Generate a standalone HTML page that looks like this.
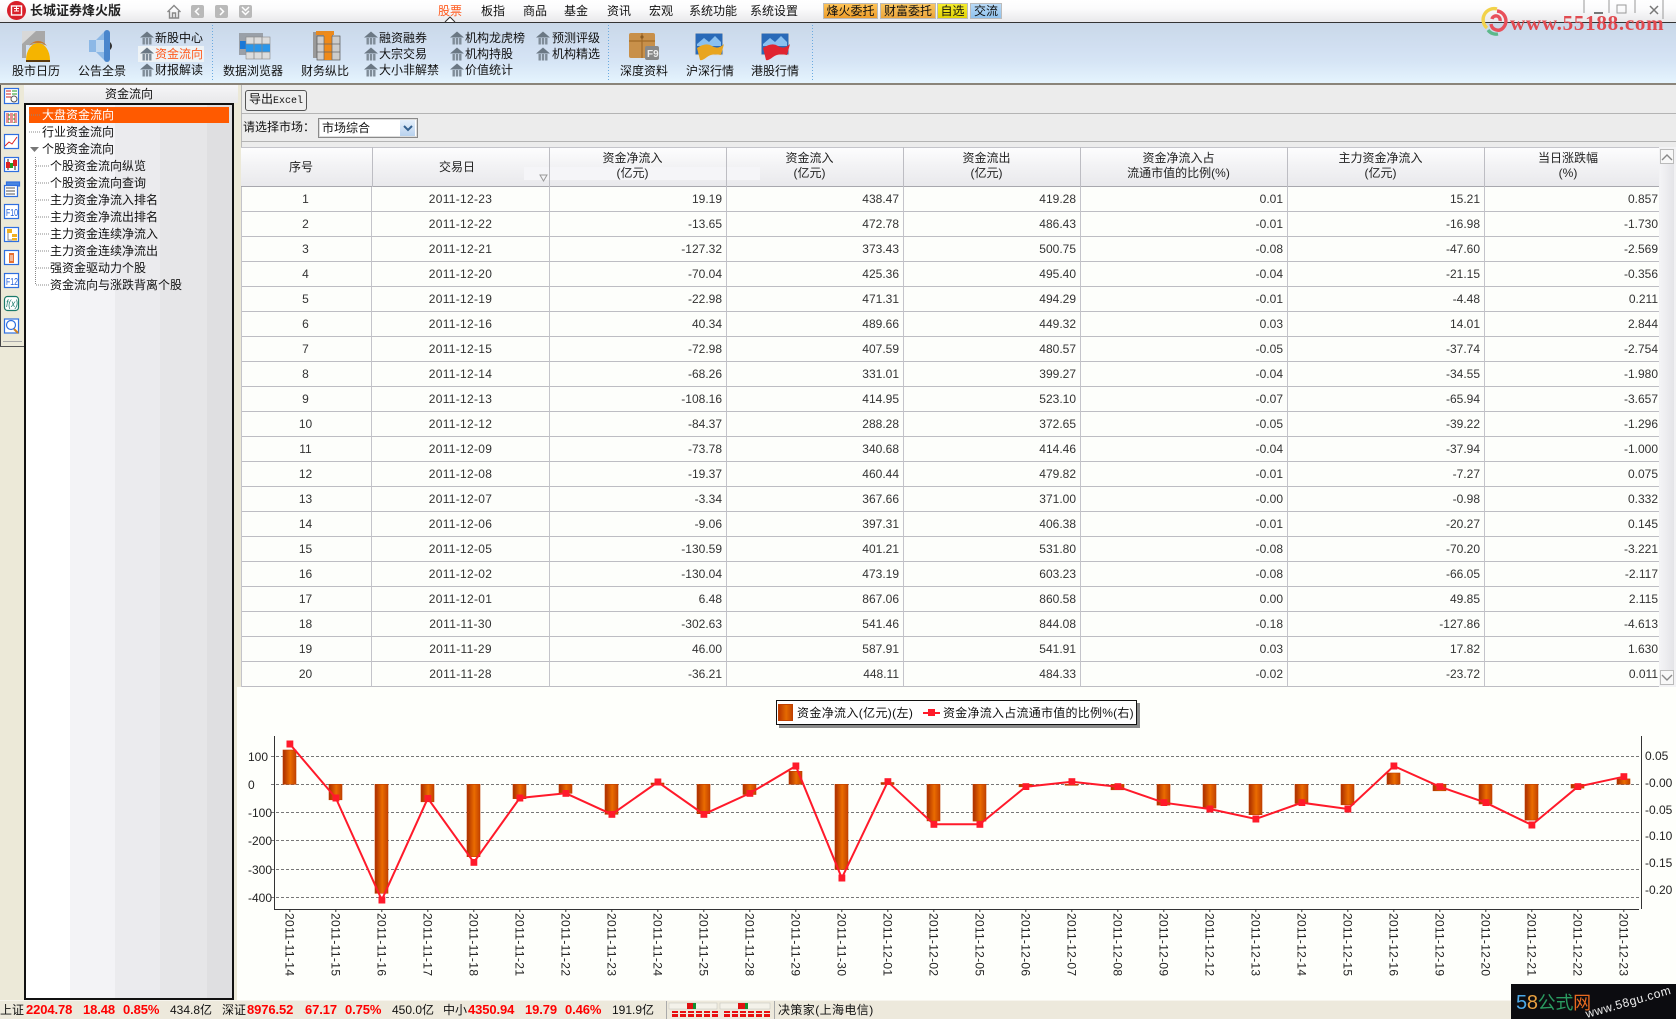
<!DOCTYPE html>
<html lang="zh"><head><meta charset="utf-8"><title>长城证券烽火版</title>
<style>
html,body{margin:0;padding:0;background:#ecebe6}
#p{position:relative;width:1676px;height:1019px;overflow:hidden;font:12px/16px "Liberation Sans","WenQuanYi Zen Hei","Noto Sans CJK SC",sans-serif;color:#111;background:#ece9d8}
.a{position:absolute}
.t{position:absolute;white-space:nowrap;line-height:16px;font-size:12px}
.o{color:#ff5a1e}
.r{color:#f00;font-weight:bold;font-size:13px;letter-spacing:-.1px}
.g{font-size:12px;color:#111}
table{position:absolute;left:241px;top:187px;border-collapse:separate;border-spacing:0;table-layout:fixed;width:1418px;background:#fdfefb;border-left:1px solid #c4c4ca;font-size:12px;color:#333}
td{height:24px;padding:0 4px 0 0;border-right:1px solid #c4c4ca;border-bottom:1px solid #bdbdc3;text-align:right;overflow:hidden;white-space:nowrap;box-sizing:content-box}
td.c{text-align:center;padding:0}
td:first-child{padding-right:2px}
td:nth-child(2){letter-spacing:.3px}
td:last-child{border-right:0;padding-right:1px}
.h{position:absolute;top:147px;height:40px;text-align:center;line-height:15px;font-size:12px;color:#222;box-sizing:border-box;padding-top:4px;padding-right:12px}
.tab{position:absolute;top:3px;height:16px;line-height:16px;text-align:center;font-size:12px;color:#111;box-shadow:inset 0 0 0 1px #bbb}
svg{position:absolute;left:0;top:0}
text{font-family:"Liberation Sans",sans-serif}
</style></head><body><div id="p">

<!-- top bar -->
<div class="a" style="left:0;top:0;width:1676px;height:22px;background:linear-gradient(#fff,#fbfbfc 40%,#e9e9eb)"></div>
<div class="a" style="left:0;top:22px;width:1676px;height:1px;background:#333"></div>
<!-- toolbar -->
<div class="a" style="left:0;top:23px;width:1676px;height:60px;background:linear-gradient(#c9d8e8,#d2e0f2 45%,#d6e5f5 65%,#e5f4fe)"></div>
<div class="a" style="left:0;top:83px;width:1676px;height:2px;background:#8a847a"></div>

<!-- left panel -->
<div class="a" style="left:0;top:85px;width:1px;height:262px;background:#444"></div>
<div class="a" style="left:24px;top:85px;width:214px;height:18px;background:linear-gradient(#f6f6f8,#e8e8ea)"></div>
<div class="a" style="left:24px;top:103px;width:206px;height:893px;border:2px solid #111;background:linear-gradient(90deg,#fff 0 44px,#f3f3f6 44px 89px,#ebebee 89px 134px,#e6e6e8 134px 181px,#dfdfe1 181px)"></div>
<div class="a" style="left:29px;top:107px;width:200px;height:16px;background:#ff5a00"></div>

<!-- right header area -->
<div class="a" style="left:241px;top:85px;width:1435px;height:62px;background:#ececec"></div>
<div class="a" style="left:241px;top:85px;width:1px;height:62px;background:#bbb"></div>
<div class="a" style="left:241px;top:113px;width:1435px;height:1px;background:#b4b4b4"></div>
<div class="a" style="left:241px;top:141px;width:1435px;height:1px;background:#b4b4b4"></div>
<div class="a" style="left:245px;top:90px;width:60px;height:19px;border:1px solid #555;border-radius:3px;background:#eee;font:10px/19px 'Liberation Mono','WenQuanYi Zen Hei',monospace;text-align:center"><span style="font-size:12px">导出</span>Excel</div>
<div class="a" style="left:318px;top:118px;width:98px;height:18px;border:1px solid #8a8a8a;background:#fff;box-shadow:inset 0 0 0 1px #ddd"></div>
<div class="a" style="left:400px;top:120px;width:15px;height:16px;background:linear-gradient(#e6f0fb,#b9d2ee);border:0"></div>

<!-- chart bg -->
<div class="a" style="left:237px;top:687px;width:1439px;height:314px;background:#fefffb"></div>
<!-- status bar -->
<div class="a" style="left:0;top:1000px;width:1676px;height:19px;background:#ede9dc;border-top:1px solid #f7f5ee;box-sizing:border-box"></div>

<!-- table header -->
<div class="a" style="left:241px;top:147px;width:1418px;height:40px;background:linear-gradient(#fdfdfe,#f3f3f5 45%,#e9e9ec);border-top:1px solid #c4c4ca;border-bottom:1px solid #a8a8ae;box-sizing:border-box"></div>
<div class="a" style="left:524px;top:167px;width:236px;height:13px;background:#f5f5f8"></div>
<div class="h" style="left:242px;width:130px;padding-top:13px">序号</div>
<div class="h" style="left:372px;width:178px;padding-top:13px;padding-right:8px">交易日</div>
<div class="h" style="left:550px;width:177px">资金净流入<br>(亿元)</div>
<div class="h" style="left:727px;width:177px">资金流入<br>(亿元)</div>
<div class="h" style="left:904px;width:177px">资金流出<br>(亿元)</div>
<div class="h" style="left:1081px;width:207px">资金净流入占<br>流通市值的比例(%)</div>
<div class="h" style="left:1288px;width:197px">主力资金净流入<br>(亿元)</div>
<div class="h" style="left:1485px;width:174px;padding-right:8px">当日涨跌幅<br>(%)</div>
<div class="a" style="left:372px;top:147px;width:1px;height:40px;background:#bdbdc3"></div>
<div class="a" style="left:549px;top:147px;width:1px;height:40px;background:#bdbdc3"></div>
<div class="a" style="left:726px;top:147px;width:1px;height:40px;background:#bdbdc3"></div>
<div class="a" style="left:903px;top:147px;width:1px;height:40px;background:#bdbdc3"></div>
<div class="a" style="left:1080px;top:147px;width:1px;height:40px;background:#bdbdc3"></div>
<div class="a" style="left:1287px;top:147px;width:1px;height:40px;background:#bdbdc3"></div>
<div class="a" style="left:1484px;top:147px;width:1px;height:40px;background:#bdbdc3"></div>

<table><colgroup><col style="width:130px"><col style="width:178px"><col style="width:177px"><col style="width:177px"><col style="width:177px"><col style="width:207px"><col style="width:197px"><col style="width:174px"></colgroup>
<tr><td class="c">1</td><td class="c">2011-12-23</td><td>19.19</td><td>438.47</td><td>419.28</td><td>0.01</td><td>15.21</td><td>0.857</td></tr>
<tr><td class="c">2</td><td class="c">2011-12-22</td><td>-13.65</td><td>472.78</td><td>486.43</td><td>-0.01</td><td>-16.98</td><td>-1.730</td></tr>
<tr><td class="c">3</td><td class="c">2011-12-21</td><td>-127.32</td><td>373.43</td><td>500.75</td><td>-0.08</td><td>-47.60</td><td>-2.569</td></tr>
<tr><td class="c">4</td><td class="c">2011-12-20</td><td>-70.04</td><td>425.36</td><td>495.40</td><td>-0.04</td><td>-21.15</td><td>-0.356</td></tr>
<tr><td class="c">5</td><td class="c">2011-12-19</td><td>-22.98</td><td>471.31</td><td>494.29</td><td>-0.01</td><td>-4.48</td><td>0.211</td></tr>
<tr><td class="c">6</td><td class="c">2011-12-16</td><td>40.34</td><td>489.66</td><td>449.32</td><td>0.03</td><td>14.01</td><td>2.844</td></tr>
<tr><td class="c">7</td><td class="c">2011-12-15</td><td>-72.98</td><td>407.59</td><td>480.57</td><td>-0.05</td><td>-37.74</td><td>-2.754</td></tr>
<tr><td class="c">8</td><td class="c">2011-12-14</td><td>-68.26</td><td>331.01</td><td>399.27</td><td>-0.04</td><td>-34.55</td><td>-1.980</td></tr>
<tr><td class="c">9</td><td class="c">2011-12-13</td><td>-108.16</td><td>414.95</td><td>523.10</td><td>-0.07</td><td>-65.94</td><td>-3.657</td></tr>
<tr><td class="c">10</td><td class="c">2011-12-12</td><td>-84.37</td><td>288.28</td><td>372.65</td><td>-0.05</td><td>-39.22</td><td>-1.296</td></tr>
<tr><td class="c">11</td><td class="c">2011-12-09</td><td>-73.78</td><td>340.68</td><td>414.46</td><td>-0.04</td><td>-37.94</td><td>-1.000</td></tr>
<tr><td class="c">12</td><td class="c">2011-12-08</td><td>-19.37</td><td>460.44</td><td>479.82</td><td>-0.01</td><td>-7.27</td><td>0.075</td></tr>
<tr><td class="c">13</td><td class="c">2011-12-07</td><td>-3.34</td><td>367.66</td><td>371.00</td><td>-0.00</td><td>-0.98</td><td>0.332</td></tr>
<tr><td class="c">14</td><td class="c">2011-12-06</td><td>-9.06</td><td>397.31</td><td>406.38</td><td>-0.01</td><td>-20.27</td><td>0.145</td></tr>
<tr><td class="c">15</td><td class="c">2011-12-05</td><td>-130.59</td><td>401.21</td><td>531.80</td><td>-0.08</td><td>-70.20</td><td>-3.221</td></tr>
<tr><td class="c">16</td><td class="c">2011-12-02</td><td>-130.04</td><td>473.19</td><td>603.23</td><td>-0.08</td><td>-66.05</td><td>-2.117</td></tr>
<tr><td class="c">17</td><td class="c">2011-12-01</td><td>6.48</td><td>867.06</td><td>860.58</td><td>0.00</td><td>49.85</td><td>2.115</td></tr>
<tr><td class="c">18</td><td class="c">2011-11-30</td><td>-302.63</td><td>541.46</td><td>844.08</td><td>-0.18</td><td>-127.86</td><td>-4.613</td></tr>
<tr><td class="c">19</td><td class="c">2011-11-29</td><td>46.00</td><td>587.91</td><td>541.91</td><td>0.03</td><td>17.82</td><td>1.630</td></tr>
<tr><td class="c">20</td><td class="c">2011-11-28</td><td>-36.21</td><td>448.11</td><td>484.33</td><td>-0.02</td><td>-23.72</td><td>0.011</td></tr>
</table>

<!-- scrollbar -->
<div class="a" style="left:1659px;top:147px;width:17px;height:540px;background:#f2f2f4"></div>
<div class="a" style="left:1660px;top:149px;width:14px;height:15px;background:#f8f8f8;border:1px solid #bbb;box-sizing:border-box"></div>
<div class="a" style="left:1660px;top:670px;width:14px;height:15px;background:#f8f8f8;border:1px solid #bbb;box-sizing:border-box"></div>
<div class="a" style="left:1660px;top:164px;width:14px;height:506px;background:linear-gradient(90deg,#f4f4f6,#e4e4e8)"></div>

<!-- legend -->
<div class="a" style="left:776px;top:700px;width:361px;height:25px;background:#fff;border:1px solid #111;box-sizing:border-box;box-shadow:3px 3px 0 #8a8a8a"></div>
<div class="a" style="left:778px;top:704px;width:15px;height:17px;background:linear-gradient(90deg,#b53000,#e56a00 55%,#bf4000);box-shadow:inset 0 0 0 1px #c04000"></div>
<div class="t" style="left:797px;top:705px;color:#111;letter-spacing:.35px">资金净流入(亿元)(左)</div>
<div class="a" style="left:923px;top:712px;width:17px;height:2px;background:#ff1a2a"></div>
<div class="a" style="left:928px;top:709px;width:7px;height:7px;background:#ff1a2a"></div>
<div class="t" style="left:943px;top:705px;color:#111;letter-spacing:.25px">资金净流入占流通市值的比例%(右)</div>

<!-- SVG layer -->
<svg width="1676" height="1019" viewBox="0 0 1676 1019">
<defs>
<linearGradient id="b" x1="0" x2="1" y1="0" y2="0"><stop offset="0" stop-color="#a82c00"/><stop offset=".55" stop-color="#ea6c00"/><stop offset="1" stop-color="#c24200"/></linearGradient>
<marker id="m" markerUnits="userSpaceOnUse" markerWidth="7" markerHeight="7" refX="3.5" refY="3.5"><rect width="7" height="7" fill="#ff1a2a"/></marker>
<symbol id="bk" viewBox="0 0 14 14"><path d="M7 0.5 L0 6.5 H14 Z" fill="#6b7884"/><path d="M2.5 7h2.4v6.5h-2.4zM5.8 7h2.4v6.5H5.8zM9.1 7h2.4v6.5H9.1z" fill="#7f8c98"/></symbol>
</defs>

<!-- logo -->
<circle cx="16.5" cy="10.5" r="9.5" fill="#d8202a"/><rect x="11.5" y="6" width="10" height="9" fill="none" stroke="#fff" stroke-width="1.4"/><path d="M14 8.5h5M16.5 6v5M14 11h5" stroke="#fff" stroke-width="1"/>
<!-- nav icons -->
<path d="M167.5 12 L174 5.5 L180.5 12 M169.5 11 V18 H178.5 V11 M172.5 18 V13 H175.5 V18" fill="none" stroke="#888" stroke-width="1.4"/>
<rect x="191" y="5" width="13" height="13" rx="2" fill="#b9b9b9"/><path d="M199 8 L195.5 11.5 L199 15" fill="none" stroke="#fff" stroke-width="1.5"/>
<rect x="215" y="5" width="13" height="13" rx="2" fill="#b9b9b9"/><path d="M220 8 L223.5 11.5 L220 15" fill="none" stroke="#fff" stroke-width="1.5"/>
<rect x="239" y="5" width="13" height="13" rx="2" fill="#b9b9b9"/><path d="M242 7 L245.5 10.5 L249 7 M242 11 L245.5 14.5 L249 11" fill="none" stroke="#fff" stroke-width="1.5"/>
<path d="M445 22 L450 17 L455 22" fill="#fdfdfd" stroke="#333"/>

<!-- toolbar separators -->
<g stroke="#6aaae0" stroke-dasharray="1 2"><path d="M212.5 25V80M608.5 25V80M812.5 25V80"/></g>

<!-- toolbar icons -->
<path d="M22 31 H45 V45 H26 V58 H22 Z" fill="#a8a8a8"/><path d="M22 31 L36 31 L22 44Z" fill="#d8d8d8"/>
<path d="M26 60 A12 17 0 0 1 50 60 Z" fill="#f5b400"/><path d="M29 46 A12 15 0 0 1 47 46 L42 43 H33Z" fill="#c47a30"/><path d="M26 60H50V62H26Z" fill="#5a3a10"/>
<path d="M89 40 H96 L105 31 V61 L96 52 H89Z" fill="#8cb8e6"/><rect x="104" y="30" width="6" height="32" rx="3" fill="#4a86cc"/><path d="M110 42 Q114 46 110 50Z" fill="#333"/><rect x="96" y="40" width="8" height="12" fill="#c0d8f0"/>
<use href="#bk" x="140" y="31" width="14" height="14"/>
<rect x="138" y="46" width="66" height="16" fill="#eef3f6"/>
<use href="#bk" x="140" y="47" width="14" height="14"/>
<use href="#bk" x="140" y="63" width="14" height="14"/>
<use href="#bk" x="364" y="31" width="14" height="14"/><use href="#bk" x="364" y="47" width="14" height="14"/><use href="#bk" x="364" y="63" width="14" height="14"/>
<use href="#bk" x="450" y="31" width="14" height="14"/><use href="#bk" x="450" y="47" width="14" height="14"/><use href="#bk" x="450" y="63" width="14" height="14"/>
<use href="#bk" x="536" y="31" width="14" height="14"/><use href="#bk" x="536" y="47" width="14" height="14"/>

<rect x="239" y="33" width="24" height="22" fill="#9aa0a8"/><rect x="240" y="41" width="23" height="8" fill="#1a78d8"/>
<rect x="246" y="37" width="24" height="22" fill="#dcdcdc" stroke="#888" stroke-width=".6"/><rect x="246" y="44" width="24" height="8" fill="#2a96ea"/><path d="M254 37V59M262 37V59M246 44H270M246 52H270" stroke="#888" stroke-width=".8"/>
<rect x="313" y="32" width="20" height="26" fill="#999"/><rect x="316" y="31" width="18" height="4" fill="#e88a20"/><rect x="317" y="36" width="23" height="24" fill="#ccc" stroke="#555" stroke-width=".7"/><rect x="324" y="33" width="8" height="27" fill="#f08a18"/><path d="M317 44H340M317 52H340M324 36V60M332 36V60" stroke="#666" stroke-width=".7"/>
<rect x="629" y="33" width="26" height="25" rx="2" fill="#c8904a"/><path d="M629 41H655M642 33V58" stroke="#a06a28" stroke-width="1.2"/><circle cx="642" cy="37" r="1.6" fill="#8a5a20"/><rect x="645" y="46" width="14" height="14" rx="2" fill="#888"/><text x="647" y="57" font-size="10" font-weight="bold" fill="#eee">F9</text>
<rect x="695" y="33" width="28" height="22" fill="#2a6ab8" stroke="#ddd"/><path d="M697 44 L704 38 L709 42 L715 36 L721 42V46H697Z" fill="#8ac0f0"/><path d="M697 48 Q706 42 712 46 T724 44 L721 55 Q712 53 707 57 T700 60Z" fill="#e8a520"/>
<rect x="761" y="33" width="28" height="22" fill="#2a6ab8" stroke="#ddd"/><path d="M763 44 L770 38 L775 42 L781 36 L787 42V46H763Z" fill="#8ac0f0"/><path d="M763 48 Q772 42 778 46 T790 44 L787 55 Q778 53 773 57 T766 60Z" fill="#e02430"/>

<!-- watermark swirl -->
<g fill="none" stroke-width="3.4"><path d="M1487 28 A11 11 0 0 1 1497 9" stroke="#f2d24a"/><path d="M1497 11 A10 10 0 0 1 1503 28 A7 7 0 0 1 1491 24" stroke="#e8505a"/><path d="M1488 30 A10 10 0 0 0 1498 34" stroke="#5cb88a"/><path d="M1492 19 A4 4 0 0 1 1500 21" stroke="#e8505a"/></g>
<!-- window buttons -->
<g stroke="#999" fill="none"><path d="M1584 0V13M1609 0V13M1635 0V13M1663 0V19"/><path d="M1594 13H1603" stroke="#777" stroke-width="2"/><rect x="1617" y="5" width="9" height="8"/><path d="M1650 6L1658 14M1658 6L1650 14" stroke="#777" stroke-width="1.5"/></g>

<!-- sidebar icons -->
<g fill="#fff" stroke="#2f6fe0" stroke-width="1.2">
<rect x="4.5" y="88.5" width="14" height="15"/><rect x="4.5" y="111.5" width="14" height="14"/><rect x="4.5" y="134.5" width="14" height="14"/><rect x="4.5" y="157.5" width="14" height="14"/><rect x="6.5" y="182" width="13" height="4" fill="#4a86e0"/><rect x="4.5" y="185.5" width="13" height="11"/><rect x="4.5" y="204.5" width="14" height="14"/><rect x="4.5" y="227.5" width="14" height="14"/><rect x="4.5" y="250.5" width="14" height="14"/><rect x="4.5" y="273.5" width="14" height="14"/><rect x="4.5" y="319" width="14" height="14"/></g>
<rect x="4.5" y="296.5" width="14" height="14" rx="3" fill="#fff" stroke="#1a7a6a" stroke-width="1.2"/>
<path d="M6 91h5M6 94h5M6 97h5" stroke="#c22" /><path d="M12 91h5M12 94h5" stroke="#292"/><circle cx="14" cy="99" r="3" fill="none" stroke="#555"/>
<path d="M6 114h11M6 116h11M6 118h11M6 120h11M6 122h11" stroke="#c22" stroke-dasharray="3 1"/><path d="M9 114V123M14 114V123" stroke="#292" stroke-dasharray="2 2"/>
<path d="M5 146 L9 142 L12 144 L17 137" stroke="#d22" fill="none"/>
<path d="M8 159V170M15 159V170" stroke="#222"/><rect x="6" y="162" width="4" height="6" fill="#d22"/><rect x="10" y="163" width="3" height="5" fill="#292"/><rect x="13" y="160" width="4" height="6" fill="#d22"/>
<path d="M6 188h9M6 191h9M6 194h9" stroke="#555"/>
<text x="6" y="216" font-size="10" fill="#1a5ad8" textLength="12" lengthAdjust="spacingAndGlyphs">F10</text>
<rect x="7" y="229" width="5" height="4" fill="#f0b020"/><rect x="12" y="234" width="5" height="3" fill="#f0b020"/><rect x="12" y="238" width="5" height="2.5" fill="#f0b020"/><path d="M8 233V240H12" stroke="#888" fill="none"/>
<path d="M9 253h5v10h-5z" fill="#e87030"/><path d="M10 256h3M10 258h3M10 260h3" stroke="#fff"/>
<text x="6" y="285" font-size="10" fill="#1a5ad8" textLength="12" lengthAdjust="spacingAndGlyphs">F12</text>
<text x="6" y="307" font-size="10" font-style="italic" fill="#1a7a6a" textLength="12" lengthAdjust="spacingAndGlyphs">f(x)</text>
<circle cx="11" cy="325" r="4.5" fill="none" stroke="#2f6fe0" stroke-width="1.2"/><path d="M14 329l4 4" stroke="#d08020" stroke-width="2"/>
<path d="M3 341.5H22" stroke="#aaa"/><path d="M0 346.5H24" stroke="#555"/>

<!-- tree lines -->
<g stroke="#888" stroke-dasharray="1 1" fill="none">
<path d="M29 115H41M29 132H41M35.5 157V285M36 166H50M36 183H50M36 200H50M36 217H50M36 234H50M36 251H50M36 268H50M36 285H50"/></g>
<path d="M30 147H39L34.5 152Z" fill="#777"/>

<!-- select arrow, sort triangle -->
<path d="M404 126 L408 130 L412 126" fill="none" stroke="#34608f" stroke-width="2"/>
<path d="M540 175 H547 L543.5 181Z" fill="none" stroke="#999"/>
<path d="M1662 160 L1667 155 L1672 160" fill="none" stroke="#888" stroke-width="1.4"/>
<path d="M1662 675 L1667 680 L1672 675" fill="none" stroke="#888" stroke-width="1.4"/>

<!-- chart grid -->
<g stroke="#777" stroke-dasharray="3 2"><path d="M271 756.5H1641M271 784.5H1641M271 812.5H1641M271 840.5H1641M271 869.5H1641M271 897.5H1641"/></g>
<path d="M274.5 736V909.5H1639M1641.5 736V909" fill="none" stroke="#333"/>
<g stroke="#333"><path d="M289.8 909v3M335.8 909v3M381.8 909v3M427.8 909v3M473.8 909v3M519.8 909v3M565.8 909v3M611.8 909v3M657.8 909v3M703.8 909v3M749.8 909v3M795.8 909v3M841.8 909v3M887.8 909v3M933.8 909v3M979.8 909v3M1025.8 909v3M1071.8 909v3M1117.8 909v3M1163.8 909v3M1209.8 909v3M1255.8 909v3M1301.8 909v3M1347.8 909v3M1393.8 909v3M1439.8 909v3M1485.8 909v3M1531.8 909v3M1577.8 909v3M1623.8 909v3"/></g>

<!-- bars -->
<g fill="url(#b)" stroke="#c04000" stroke-width=".6">
<rect x="283" y="750" width="13" height="34.3"/><rect x="329" y="784.3" width="13" height="15.5"/><rect x="375" y="784.3" width="13" height="109"/><rect x="421" y="784.3" width="13" height="17.5"/><rect x="467" y="784.3" width="13" height="72.4"/><rect x="513" y="784.3" width="13" height="14.4"/><rect x="559" y="784.3" width="13" height="9"/><rect x="605" y="784.3" width="13" height="30"/><rect x="651" y="783" width="13" height="1.5"/><rect x="697" y="784.3" width="13" height="29.4"/><rect x="743" y="784.3" width="13" height="10.2"/><rect x="789" y="771.3" width="13" height="13"/><rect x="835" y="784.3" width="13" height="85.2"/><rect x="881" y="782.5" width="13" height="1.8"/><rect x="927" y="784.3" width="13" height="36.6"/><rect x="973" y="784.3" width="13" height="36.8"/><rect x="1019" y="784.3" width="13" height="2.5"/><rect x="1065" y="784.3" width="13" height="1"/><rect x="1111" y="784.3" width="13" height="5.5"/><rect x="1157" y="784.3" width="13" height="20.8"/><rect x="1203" y="784.3" width="13" height="23.8"/><rect x="1249" y="784.3" width="13" height="30.4"/><rect x="1295" y="784.3" width="13" height="19.2"/><rect x="1341" y="784.3" width="13" height="20.5"/><rect x="1387" y="773" width="13" height="11.3"/><rect x="1433" y="784.3" width="13" height="6.5"/><rect x="1479" y="784.3" width="13" height="19.7"/><rect x="1525" y="784.3" width="13" height="35.8"/><rect x="1571" y="784.3" width="13" height="3.8"/><rect x="1617" y="778.9" width="13" height="5.4"/>
</g>
<polyline fill="none" stroke="#ff1a2a" stroke-width="2" marker-start="url(#m)" marker-mid="url(#m)" marker-end="url(#m)" points="289.8,744 335.8,798 381.8,900 427.8,798.3 473.8,862.3 519.8,798 565.8,793.3 611.8,814.3 657.8,782 703.8,814.3 749.8,793.3 795.8,766 841.8,878 887.8,781.7 933.8,824.3 979.8,824.3 1025.8,786.7 1071.8,781.7 1117.8,786.7 1163.8,802.7 1209.8,809 1255.8,819 1301.8,802.7 1347.8,809 1393.8,766 1439.8,786.7 1485.8,802.7 1531.8,825 1577.8,786.7 1623.8,776.7"/>

<!-- axis labels -->
<g font-size="12" fill="#222">
<text x="248" y="761">100</text><text x="248" y="789">0</text><text x="248" y="817">-100</text><text x="248" y="845">-200</text><text x="248" y="874">-300</text><text x="248" y="902">-400</text>
<text x="1645" y="760">0.05</text><text x="1645" y="787">-0.00</text><text x="1645" y="814">-0.05</text><text x="1645" y="840">-0.10</text><text x="1645" y="867">-0.15</text><text x="1645" y="894">-0.20</text>
</g>
<g font-size="12" fill="#222">
<text transform="translate(285.3,913) rotate(90)" textLength="63">2011-11-14</text>
<text transform="translate(331.3,913) rotate(90)" textLength="63">2011-11-15</text>
<text transform="translate(377.3,913) rotate(90)" textLength="63">2011-11-16</text>
<text transform="translate(423.3,913) rotate(90)" textLength="63">2011-11-17</text>
<text transform="translate(469.3,913) rotate(90)" textLength="63">2011-11-18</text>
<text transform="translate(515.3,913) rotate(90)" textLength="63">2011-11-21</text>
<text transform="translate(561.3,913) rotate(90)" textLength="63">2011-11-22</text>
<text transform="translate(607.3,913) rotate(90)" textLength="63">2011-11-23</text>
<text transform="translate(653.3,913) rotate(90)" textLength="63">2011-11-24</text>
<text transform="translate(699.3,913) rotate(90)" textLength="63">2011-11-25</text>
<text transform="translate(745.3,913) rotate(90)" textLength="63">2011-11-28</text>
<text transform="translate(791.3,913) rotate(90)" textLength="63">2011-11-29</text>
<text transform="translate(837.3,913) rotate(90)" textLength="63">2011-11-30</text>
<text transform="translate(883.3,913) rotate(90)" textLength="63">2011-12-01</text>
<text transform="translate(929.3,913) rotate(90)" textLength="63">2011-12-02</text>
<text transform="translate(975.3,913) rotate(90)" textLength="63">2011-12-05</text>
<text transform="translate(1021.3,913) rotate(90)" textLength="63">2011-12-06</text>
<text transform="translate(1067.3,913) rotate(90)" textLength="63">2011-12-07</text>
<text transform="translate(1113.3,913) rotate(90)" textLength="63">2011-12-08</text>
<text transform="translate(1159.3,913) rotate(90)" textLength="63">2011-12-09</text>
<text transform="translate(1205.3,913) rotate(90)" textLength="63">2011-12-12</text>
<text transform="translate(1251.3,913) rotate(90)" textLength="63">2011-12-13</text>
<text transform="translate(1297.3,913) rotate(90)" textLength="63">2011-12-14</text>
<text transform="translate(1343.3,913) rotate(90)" textLength="63">2011-12-15</text>
<text transform="translate(1389.3,913) rotate(90)" textLength="63">2011-12-16</text>
<text transform="translate(1435.3,913) rotate(90)" textLength="63">2011-12-19</text>
<text transform="translate(1481.3,913) rotate(90)" textLength="63">2011-12-20</text>
<text transform="translate(1527.3,913) rotate(90)" textLength="63">2011-12-21</text>
<text transform="translate(1573.3,913) rotate(90)" textLength="63">2011-12-22</text>
<text transform="translate(1619.3,913) rotate(90)" textLength="63">2011-12-23</text>
</g>

<!-- status gauges -->
<path d="M666.5 1001V1019M774.5 1001V1019" stroke="#aaa"/>
<g fill="#f4f2ea" stroke="#c8c8c0" stroke-width=".6"><rect x="669" y="1003" width="48" height="6"/><rect x="720" y="1003" width="50" height="6"/></g>
<rect x="687" y="1003" width="6" height="6" fill="#e01010"/><rect x="693" y="1003" width="3" height="6" fill="#109030"/>
<rect x="738" y="1003" width="7" height="6" fill="#e01010"/><rect x="745" y="1003" width="3" height="6" fill="#109030"/>
<g fill="#e81010"><rect x="672" y="1011" width="6" height="2"/><rect x="680" y="1011" width="6" height="2"/><rect x="688" y="1011" width="6" height="2"/><rect x="696" y="1011" width="6" height="2"/><rect x="704" y="1011" width="6" height="2"/><rect x="712" y="1011" width="6" height="2"/><rect x="672" y="1014" width="6" height="3"/><rect x="680" y="1014" width="6" height="3"/><rect x="688" y="1014" width="6" height="3"/><rect x="696" y="1014" width="6" height="3"/><rect x="704" y="1014" width="6" height="3"/><rect x="712" y="1014" width="6" height="3"/>
<rect x="724" y="1011" width="6" height="2"/><rect x="732" y="1011" width="6" height="2"/><rect x="740" y="1011" width="6" height="2"/><rect x="748" y="1011" width="6" height="2"/><rect x="756" y="1011" width="6" height="2"/><rect x="764" y="1011" width="6" height="2"/><rect x="724" y="1014" width="6" height="3"/><rect x="732" y="1014" width="6" height="3"/><rect x="740" y="1014" width="6" height="3"/><rect x="748" y="1014" width="6" height="3"/><rect x="756" y="1014" width="6" height="3"/><rect x="764" y="1014" width="6" height="3"/></g>

<!-- 58 badge -->
<rect x="1511" y="984" width="165" height="35" fill="#0c0c10"/>
</svg>

<!-- top texts -->
<div class="t" style="left:30px;top:3px;font-size:13px;font-weight:bold;color:#222">长城证券烽火版</div>
<div class="t o" style="left:438px;top:3px">股票</div>
<div class="t" style="left:481px;top:3px">板指</div>
<div class="t" style="left:523px;top:3px">商品</div>
<div class="t" style="left:564px;top:3px">基金</div>
<div class="t" style="left:607px;top:3px">资讯</div>
<div class="t" style="left:649px;top:3px">宏观</div>
<div class="t" style="left:689px;top:3px">系统功能</div>
<div class="t" style="left:750px;top:3px">系统设置</div>
<div class="tab" style="left:823px;width:55px;background:linear-gradient(#ffc65a,#ec9a28)">烽火委托</div>
<div class="tab" style="left:880px;width:56px;background:linear-gradient(#fbc965,#eaa238)">财富委托</div>
<div class="tab" style="left:937px;width:31px;background:linear-gradient(#f5ee30,#e0d000)">自选</div>
<div class="tab" style="left:970px;width:32px;background:linear-gradient(#bcdcf8,#8cc0ec)">交流</div>
<div class="t" style="left:1510px;top:11px;font:bold 21px/24px 'Liberation Serif',serif;color:#e04a50;letter-spacing:.75px">www.55188.com</div>

<!-- toolbar texts -->
<div class="t" style="left:12px;top:63px">股市日历</div>
<div class="t" style="left:78px;top:63px">公告全景</div>
<div class="t" style="left:155px;top:30px">新股中心</div>
<div class="t o" style="left:155px;top:46px">资金流向</div>
<div class="t" style="left:155px;top:62px">财报解读</div>
<div class="t" style="left:223px;top:63px">数据浏览器</div>
<div class="t" style="left:301px;top:63px">财务纵比</div>
<div class="t" style="left:379px;top:30px">融资融券</div>
<div class="t" style="left:379px;top:46px">大宗交易</div>
<div class="t" style="left:379px;top:62px">大小非解禁</div>
<div class="t" style="left:465px;top:30px">机构龙虎榜</div>
<div class="t" style="left:465px;top:46px">机构持股</div>
<div class="t" style="left:465px;top:62px">价值统计</div>
<div class="t" style="left:552px;top:30px">预测评级</div>
<div class="t" style="left:552px;top:46px">机构精选</div>
<div class="t" style="left:620px;top:63px">深度资料</div>
<div class="t" style="left:686px;top:63px">沪深行情</div>
<div class="t" style="left:751px;top:63px">港股行情</div>

<!-- tree texts -->
<div class="t" style="left:105px;top:86px">资金流向</div>
<div class="t" style="left:42px;top:107px;color:#fff">大盘资金流向</div>
<div class="t" style="left:42px;top:124px">行业资金流向</div>
<div class="t" style="left:42px;top:141px">个股资金流向</div>
<div class="t" style="left:50px;top:158px">个股资金流向纵览</div>
<div class="t" style="left:50px;top:175px">个股资金流向查询</div>
<div class="t" style="left:50px;top:192px">主力资金净流入排名</div>
<div class="t" style="left:50px;top:209px">主力资金净流出排名</div>
<div class="t" style="left:50px;top:226px">主力资金连续净流入</div>
<div class="t" style="left:50px;top:243px">主力资金连续净流出</div>
<div class="t" style="left:50px;top:260px">强资金驱动力个股</div>
<div class="t" style="left:50px;top:277px">资金流向与涨跌背离个股</div>

<div class="t" style="left:243px;top:119px">请选择市场：</div>
<div class="t" style="left:322px;top:120px">市场综合</div>

<!-- status -->
<div class="t" style="left:0;top:1002px">上证</div><div class="t r" style="left:26px;top:1002px">2204.78</div><div class="t r" style="left:83px;top:1002px">18.48</div><div class="t r" style="left:123px;top:1002px">0.85%</div><div class="t g" style="left:170px;top:1002px">434.8亿</div>
<div class="t" style="left:222px;top:1002px">深证</div><div class="t r" style="left:247px;top:1002px">8976.52</div><div class="t r" style="left:305px;top:1002px">67.17</div><div class="t r" style="left:345px;top:1002px">0.75%</div><div class="t g" style="left:392px;top:1002px">450.0亿</div>
<div class="t" style="left:443px;top:1002px">中小</div><div class="t r" style="left:468px;top:1002px">4350.94</div><div class="t r" style="left:525px;top:1002px">19.79</div><div class="t r" style="left:565px;top:1002px">0.46%</div><div class="t g" style="left:612px;top:1002px">191.9亿</div>
<div class="t" style="left:778px;top:1002px;letter-spacing:.4px">决策家(上海电信)</div>

<!-- 58 badge -->
<div class="t" style="left:1516px;top:991px;font-size:20px;line-height:24px;letter-spacing:-.3px"><span style="color:#4aa8e8">5</span><span style="color:#e8a040">8</span><span style="color:#2a9a60;font-size:18px">公</span><span style="color:#2a9a60;font-size:18px">式</span><span style="color:#e86a20;font-size:18px">网</span></div>
<div class="t" style="left:1584px;top:994px;font-size:12px;color:#eee;transform:rotate(-16deg);letter-spacing:.6px">www.58gu.com</div>
</div></body></html>
